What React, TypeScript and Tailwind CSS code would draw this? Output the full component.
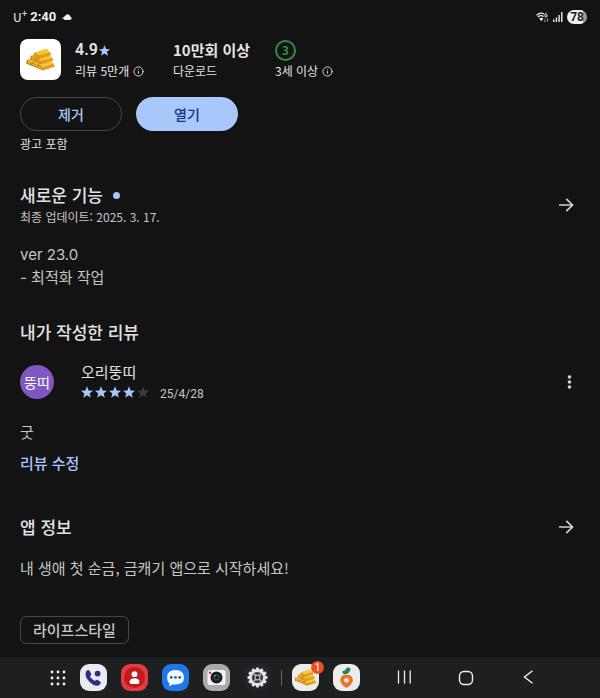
import React from 'react';
import { Info } from 'lucide-react';

const RATING = 4;

// Back to front: bottom row, middle row, then the top bar
const BARS = [
  { x: 1, y: 10.5 },
  { x: 6, y: 12.5 },
  { x: 12, y: 15 },
  { x: 5, y: 6.5 },
  { x: 10.5, y: 9 },
  { x: 8.5, y: 3.5 },
];

function GoldBars({ className }: { className?: string }) {
  return (
    <svg viewBox="-1 -1 31 23" className={className} aria-hidden="true">
      {BARS.map((b) => (
        <g key={`${b.x}-${b.y}`} transform={`translate(${b.x} ${b.y})`}>
          <path d="M0 0 L12 -4 L15.5 -0.6 L4 3 Z" fill="#f8c63a" />
          <path d="M4 3 L15.5 -0.6 L17 2.6 L5 6.5 Z" fill="#e2a01a" />
          <path d="M0 0 L4 3 L5 6.5 L-1 4 Z" fill="#c08113" />
          <path d="M0.6 1.4 L3.2 3.4 L3.7 5 L0.3 3.6 Z" fill="#e9b434" />
        </g>
      ))}
    </svg>
  );
}

function StarIcon({ className }: { className?: string }) {
  return (
    <svg viewBox="1.5 1 21 21" className={className} fill="currentColor" aria-hidden="true">
      <path d="M12 17.3 L18.6 21.6 L16.6 14 L22.5 9.2 L14.9 8.7 L12 1.4 L9.1 8.7 L1.5 9.2 L7.4 14 L5.4 21.6 Z" />
    </svg>
  );
}

function ArrowIcon() {
  return (
    <svg viewBox="0 0 20 20" className="size-5 text-[#d0d3d1]" fill="none" stroke="currentColor" strokeWidth="1.7" aria-hidden="true">
      <path d="M3 10 H16 M10.3 3.8 L16.5 10 L10.3 16.2" />
    </svg>
  );
}

function StatusBar() {
  return (
    <header className="flex h-[34px] items-center justify-between px-[13px] text-[#f0f0f0]">
      <div className="flex items-center">
        <span className="text-xs">
          U<sup className="text-[10px]">+</sup>
        </span>
        <span className="ml-[3px] font-['Roboto',sans-serif] text-[13px] font-bold">2:40</span>
        <svg viewBox="0 0 10 8" className="ml-1.5 h-2 w-2.5" aria-hidden="true">
          <path d="M0 5.4 L3 3 Q4.5 0.6 6.6 1.6 Q8.6 2.6 8.8 4.2 Q10 4.6 9.8 5.8 Q9 7 6 7 H3.4 Q2 7 1.6 5.8 Z" fill="currentColor" />
        </svg>
      </div>
      <div className="flex items-center gap-1">
        <svg viewBox="0 0 13 11" className="h-[11px] w-[13px]" fill="none" stroke="currentColor" aria-hidden="true">
          <path d="M0.5 3.2 Q4.5 -0.2 8 2 M1.8 5 Q4.8 2.6 7.6 4.6" strokeWidth="1.2" />
          <path d="M3.2 6.4 L5.3 9.2 L7.4 6.4 Q5.3 5 3.2 6.4 Z" fill="currentColor" stroke="none" />
          <path d="M10.6 0.8 Q8.8 1.6 8.8 3.6 A1.2 1.2 0 1 0 10 2.6" strokeWidth="1" />
          <path d="M9 6.5 V10 L8 9 M11.5 10 V6.5 L12.6 7.6" strokeWidth="0.8" stroke="#a0a0a0" />
        </svg>
        <svg viewBox="0 0 10 10" className="size-2.5" aria-hidden="true">
          <path d="M0 7.5h1.4V10H0z M2.7 5.5h1.4V10H2.7z M5.4 3h1.4v7H5.4z M8.1 0h1.4v10H8.1z" fill="currentColor" />
        </svg>
        <span className="rounded-full bg-linear-to-r from-[#f2f2f2] from-78% to-[#9b9b9b] to-78% px-[3px] font-['Roboto',sans-serif] text-xs leading-[14px] font-bold text-[#1b1b1b]">
          78
        </span>
      </div>
    </header>
  );
}

function AppSummary() {
  return (
    <section>
      <div className="flex items-start">
        <div className="flex size-[41px] items-center justify-center rounded-lg bg-white">
          <GoldBars className="w-[31px]" />
        </div>
        <div className="ml-3.5 w-[98px]">
          <p className="flex items-center gap-px font-['Roboto',sans-serif] text-base leading-[22px] font-semibold">
            4.9
            <StarIcon className="size-[11px] text-[#a8c7fa]" />
          </p>
          <p className="flex items-center gap-1 text-xs leading-5">
            리뷰 5만개 <Info className="size-[11px]" />
          </p>
        </div>
        <div className="w-[102px]">
          <p className="text-[15px] leading-[22px] font-bold">10만회 이상</p>
          <p className="text-xs leading-5">다운로드</p>
        </div>
        <div>
          <p className="flex h-[22px] items-center">
            <span className="flex size-[21px] items-center justify-center rounded-full border-2 border-[#358a43] text-[11px] font-bold text-[#3d9a4b]">
              3
            </span>
          </p>
          <p className="flex items-center gap-1 text-xs leading-5">
            3세 이상 <Info className="size-[11px]" />
          </p>
        </div>
      </div>
      <div className="mt-4 flex gap-3.5">
        <button className="h-[34px] w-[102px] rounded-full border border-[#444746] text-sm font-medium text-[#a8c7fa]">
          제거
        </button>
        <button className="h-[34px] w-[102px] rounded-full bg-[#a8c7fa] text-sm font-medium text-[#0b3a7e]">
          열기
        </button>
      </div>
      <p className="mt-[3px] text-xs leading-5">광고 포함</p>
    </section>
  );
}

function WhatsNew() {
  return (
    <section className="mt-[29px]">
      <div className="flex items-center justify-between">
        <div>
          <h2 className="flex items-center gap-2.5 text-[17px] leading-6 font-medium">
            새로운 기능
            <span className="size-[7px] rounded-full bg-[#a8c7fa]" />
          </h2>
          <p className="text-xs leading-5 text-[#c4c7c5]">최종 업데이트: 2025. 3. 17.</p>
        </div>
        <button aria-label="새로운 기능">
          <ArrowIcon />
        </button>
      </div>
      <p className="mt-4 font-['Inter','Noto_Sans_CJK_KR',sans-serif] text-[15px] leading-[23px] text-[#c4c7c5]">
        ver 23.0
        <br />- 최적화 작업
      </p>
    </section>
  );
}

function MyReview() {
  return (
    <section className="mt-[31px]">
      <h2 className="text-[17px] leading-6 font-medium">내가 작성한 리뷰</h2>
      <div className="mt-[18px] flex items-center">
        <span className="flex size-[34px] items-center justify-center rounded-full bg-[#7e57c2] text-sm text-white">
          뚱띠
        </span>
        <div className="ml-[27px]">
          <p className="text-[15px] leading-5">오리뚱띠</p>
          <div className="flex h-5 items-center">
            <div className="flex gap-0.5" role="img" aria-label="별점 4점">
              {[1, 2, 3, 4, 5].map((n) => (
                <StarIcon key={n} className={`size-3 ${n <= RATING ? 'text-[#a8c7fa]' : 'text-[#3a3b3c]'}`} />
              ))}
            </div>
            <span className="ml-[11px] pt-1 font-['Roboto',sans-serif] text-xs text-[#c4c7c5]">25/4/28</span>
          </div>
        </div>
        <button className="ml-auto" aria-label="더보기">
          <svg viewBox="0 0 12 16" className="h-4 w-3" fill="#d0d3d1">
            <circle cx="5.5" cy="3" r="1.8" />
            <circle cx="5.5" cy="8" r="1.8" />
            <circle cx="5.5" cy="13" r="1.8" />
          </svg>
        </button>
      </div>
      <p className="mt-[18px] text-[15px] leading-[23px] text-[#c4c7c5]">굿</p>
      <a href="#edit" className="mt-2 block w-fit text-[15px] leading-6 font-medium text-[#a8c7fa]">
        리뷰 수정
      </a>
    </section>
  );
}

function AppInfo() {
  return (
    <section className="mt-10">
      <div className="flex items-center justify-between">
        <h2 className="text-[17px] leading-6 font-medium">앱 정보</h2>
        <button aria-label="앱 정보">
          <ArrowIcon />
        </button>
      </div>
      <p className="mt-[17px] text-[15px] leading-[23px] text-[#c4c7c5]">내 생애 첫 순금, 금캐기 앱으로 시작하세요!</p>
      <button className="mt-[37px] h-7 rounded-md border border-[#444746] px-3 text-[15px] leading-6 font-medium text-[#c4c7c5]">
        라이프스타일
      </button>
    </section>
  );
}

function Taskbar() {
  const gearTeeth = [0, 30, 60, 90, 120, 150, 180, 210, 240, 270, 300, 330];
  return (
    <nav className="mt-auto flex h-[41px] items-center bg-[#1d1f21] pr-[41px] pl-[49px]">
      <div className="flex items-center gap-3.5">
        <button aria-label="앱 목록">
          <svg viewBox="0 0 17 17" className="size-[17px]" fill="#f2f2f2">
            {[3, 9, 15].map((y) => [3, 9, 15].map((x) => <circle key={`${x}-${y}`} cx={x} cy={y} r="1.4" />))}
          </svg>
        </button>
        <button aria-label="전화">
          <svg viewBox="0 0 27 27" className="size-[27px]">
            <rect width="27" height="27" rx="9" fill="#e9ebf0" />
            <path
              d="M6.5 7 Q8.2 5.2 9.6 7 L11 9.2 Q11.7 10.4 10.6 11.5 Q9.8 12.3 10.6 13.4 L13.5 16.3 Q14.6 17.2 15.5 16.4 Q16.6 15.4 17.8 16.1 L20 17.5 Q21.7 18.8 20 20.4 Q17.2 22.8 13.2 20.7 Q9 18.4 6.5 14 Q4.5 9.8 6.5 7 Z"
              fill="#2c2f83"
            />
            <circle cx="17.6" cy="9.6" r="2.9" fill="#2c2f83" />
          </svg>
        </button>
        <button aria-label="연락처">
          <svg viewBox="0 0 27 27" className="size-[27px]">
            <rect width="27" height="27" rx="9" fill="#e33c40" />
            <circle cx="13.5" cy="13.5" r="10.5" fill="#c2181f" />
            <circle cx="13.5" cy="10.2" r="2.9" fill="#fff" />
            <path d="M8.5 18 Q8.8 14.3 13.5 14.3 Q18.2 14.3 18.5 18 Q18.3 20 16.5 20 H10.5 Q8.7 20 8.5 18 Z" fill="#fff" />
          </svg>
        </button>
        <button aria-label="메시지">
          <svg viewBox="0 0 27 27" className="size-[27px]">
            <rect width="27" height="27" rx="9" fill="#1e78e6" />
            <path d="M13.5 6 Q22 6 22 13.5 Q22 20.5 13.5 20.5 H10 Q8.5 22 7 22 Q7.6 21 7.4 19.5 Q5 17.5 5 13.5 Q5 6 13.5 6 Z" fill="#f5f8ff" />
            <circle cx="9.3" cy="13.4" r="1.4" fill="#1e62c8" />
            <circle cx="13.5" cy="13.4" r="1.4" fill="#1e62c8" />
            <circle cx="17.7" cy="13.4" r="1.4" fill="#1e62c8" />
          </svg>
        </button>
        <button aria-label="카메라">
          <svg viewBox="0 0 27 27" className="size-[27px]">
            <rect width="27" height="27" rx="9" fill="#a9abae" />
            <rect x="4.5" y="6" width="18" height="15" rx="2.5" fill="#f3f3f3" />
            <circle cx="13.5" cy="13.5" r="6" fill="#1a1d22" />
            <circle cx="13.5" cy="13.5" r="3" fill="#32454f" />
            <circle cx="13.5" cy="13.5" r="1.5" fill="#0b0d10" />
            <circle cx="12" cy="11.8" r="0.8" fill="#a3b8c2" />
            <circle cx="7" cy="8.7" r="1.2" fill="#dc3434" />
          </svg>
        </button>
        <button aria-label="설정">
          <svg viewBox="0 0 27 27" className="size-[27px]">
            <rect width="27" height="27" rx="9" fill="#23232d" />
            {gearTeeth.map((deg) => (
              <rect key={deg} x="12" y="3.5" width="3" height="4" rx="0.8" fill="#e4e4e4" transform={`rotate(${deg} 13.5 13.5)`} />
            ))}
            <circle cx="13.5" cy="13.5" r="8.4" fill="#e4e4e4" />
            <circle cx="13.5" cy="13.5" r="5.6" fill="#3b3b43" />
            <path d="M9.5 9.5 L17.5 17.5 M17.5 9.5 L9.5 17.5" stroke="#b9b9bc" strokeWidth="1.5" />
            <circle cx="13.5" cy="13.5" r="2.9" fill="#b9b9bc" />
            <circle cx="13.5" cy="13.5" r="1.7" fill="#2a2a32" />
          </svg>
        </button>
      </div>
      <span className="mx-2.5 h-4 w-px bg-[#626466]" />
      <div className="flex items-center gap-3.5">
        <button className="relative flex size-[27px] items-center justify-center rounded-[9px] bg-[#ececec]" aria-label="금캐기">
          <GoldBars className="w-[23px]" />
          <span className="absolute -top-[3px] -right-[5px] flex size-[13px] items-center justify-center rounded-full bg-[#ea5025] font-['Roboto',sans-serif] text-[10px] text-white">
            1
          </span>
        </button>
        <button aria-label="당근">
          <svg viewBox="0 0 27 27" className="size-[27px]">
            <rect width="27" height="27" rx="9" fill="#ececec" />
            <path d="M13.3 10 Q8.8 11 9.6 7.3 Q10.6 6.2 12.2 6.8 Q12.3 3.8 15.4 3.5 Q18.4 3.8 17 7 Q16 9.4 13.3 10 Z" fill="#178c54" />
            <path d="M13.5 10.8 Q19.7 10.8 19.8 16.2 Q19.6 20.6 13.5 24 Q7.4 20.6 7.2 16.2 Q7.3 10.8 13.5 10.8 Z" fill="#e9752a" />
            <circle cx="13.5" cy="16.3" r="2.4" fill="#ececec" />
          </svg>
        </button>
      </div>
      <div className="ml-auto flex text-[#eeeeee]">
        <button className="flex w-[62px] justify-center" aria-label="최근 앱">
          <svg viewBox="0 0 14 14" className="size-3.5" stroke="currentColor" strokeWidth="1.3">
            <path d="M1.5 0.5v13M7.5 0.5v13M13.2 0.5v13" />
          </svg>
        </button>
        <button className="flex w-[62px] justify-center" aria-label="홈">
          <svg viewBox="0 0 16 16" className="size-4" fill="none" stroke="currentColor" strokeWidth="1.4">
            <rect x="1.5" y="1.5" width="13" height="13" rx="4.5" />
          </svg>
        </button>
        <button className="flex w-[62px] justify-center" aria-label="뒤로">
          <svg viewBox="0 0 14 14" className="size-3.5" fill="none" stroke="currentColor" strokeWidth="1.4">
            <path d="M11.5 0.8 L3.5 7 L11.5 13.2" />
          </svg>
        </button>
      </div>
    </nav>
  );
}

export default function App() {
  return (
    <div
      lang="ko"
      className="flex min-h-screen flex-col bg-[#131313] font-['Noto_Sans_CJK_KR',sans-serif] text-[#e3e3e3]"
    >
      <StatusBar />
      <main className="px-5 pt-[5px] pb-3 [&_section:not(:first-child)]:pr-1">
        <AppSummary />
        <WhatsNew />
        <MyReview />
        <AppInfo />
      </main>
      <Taskbar />
    </div>
  );
}
